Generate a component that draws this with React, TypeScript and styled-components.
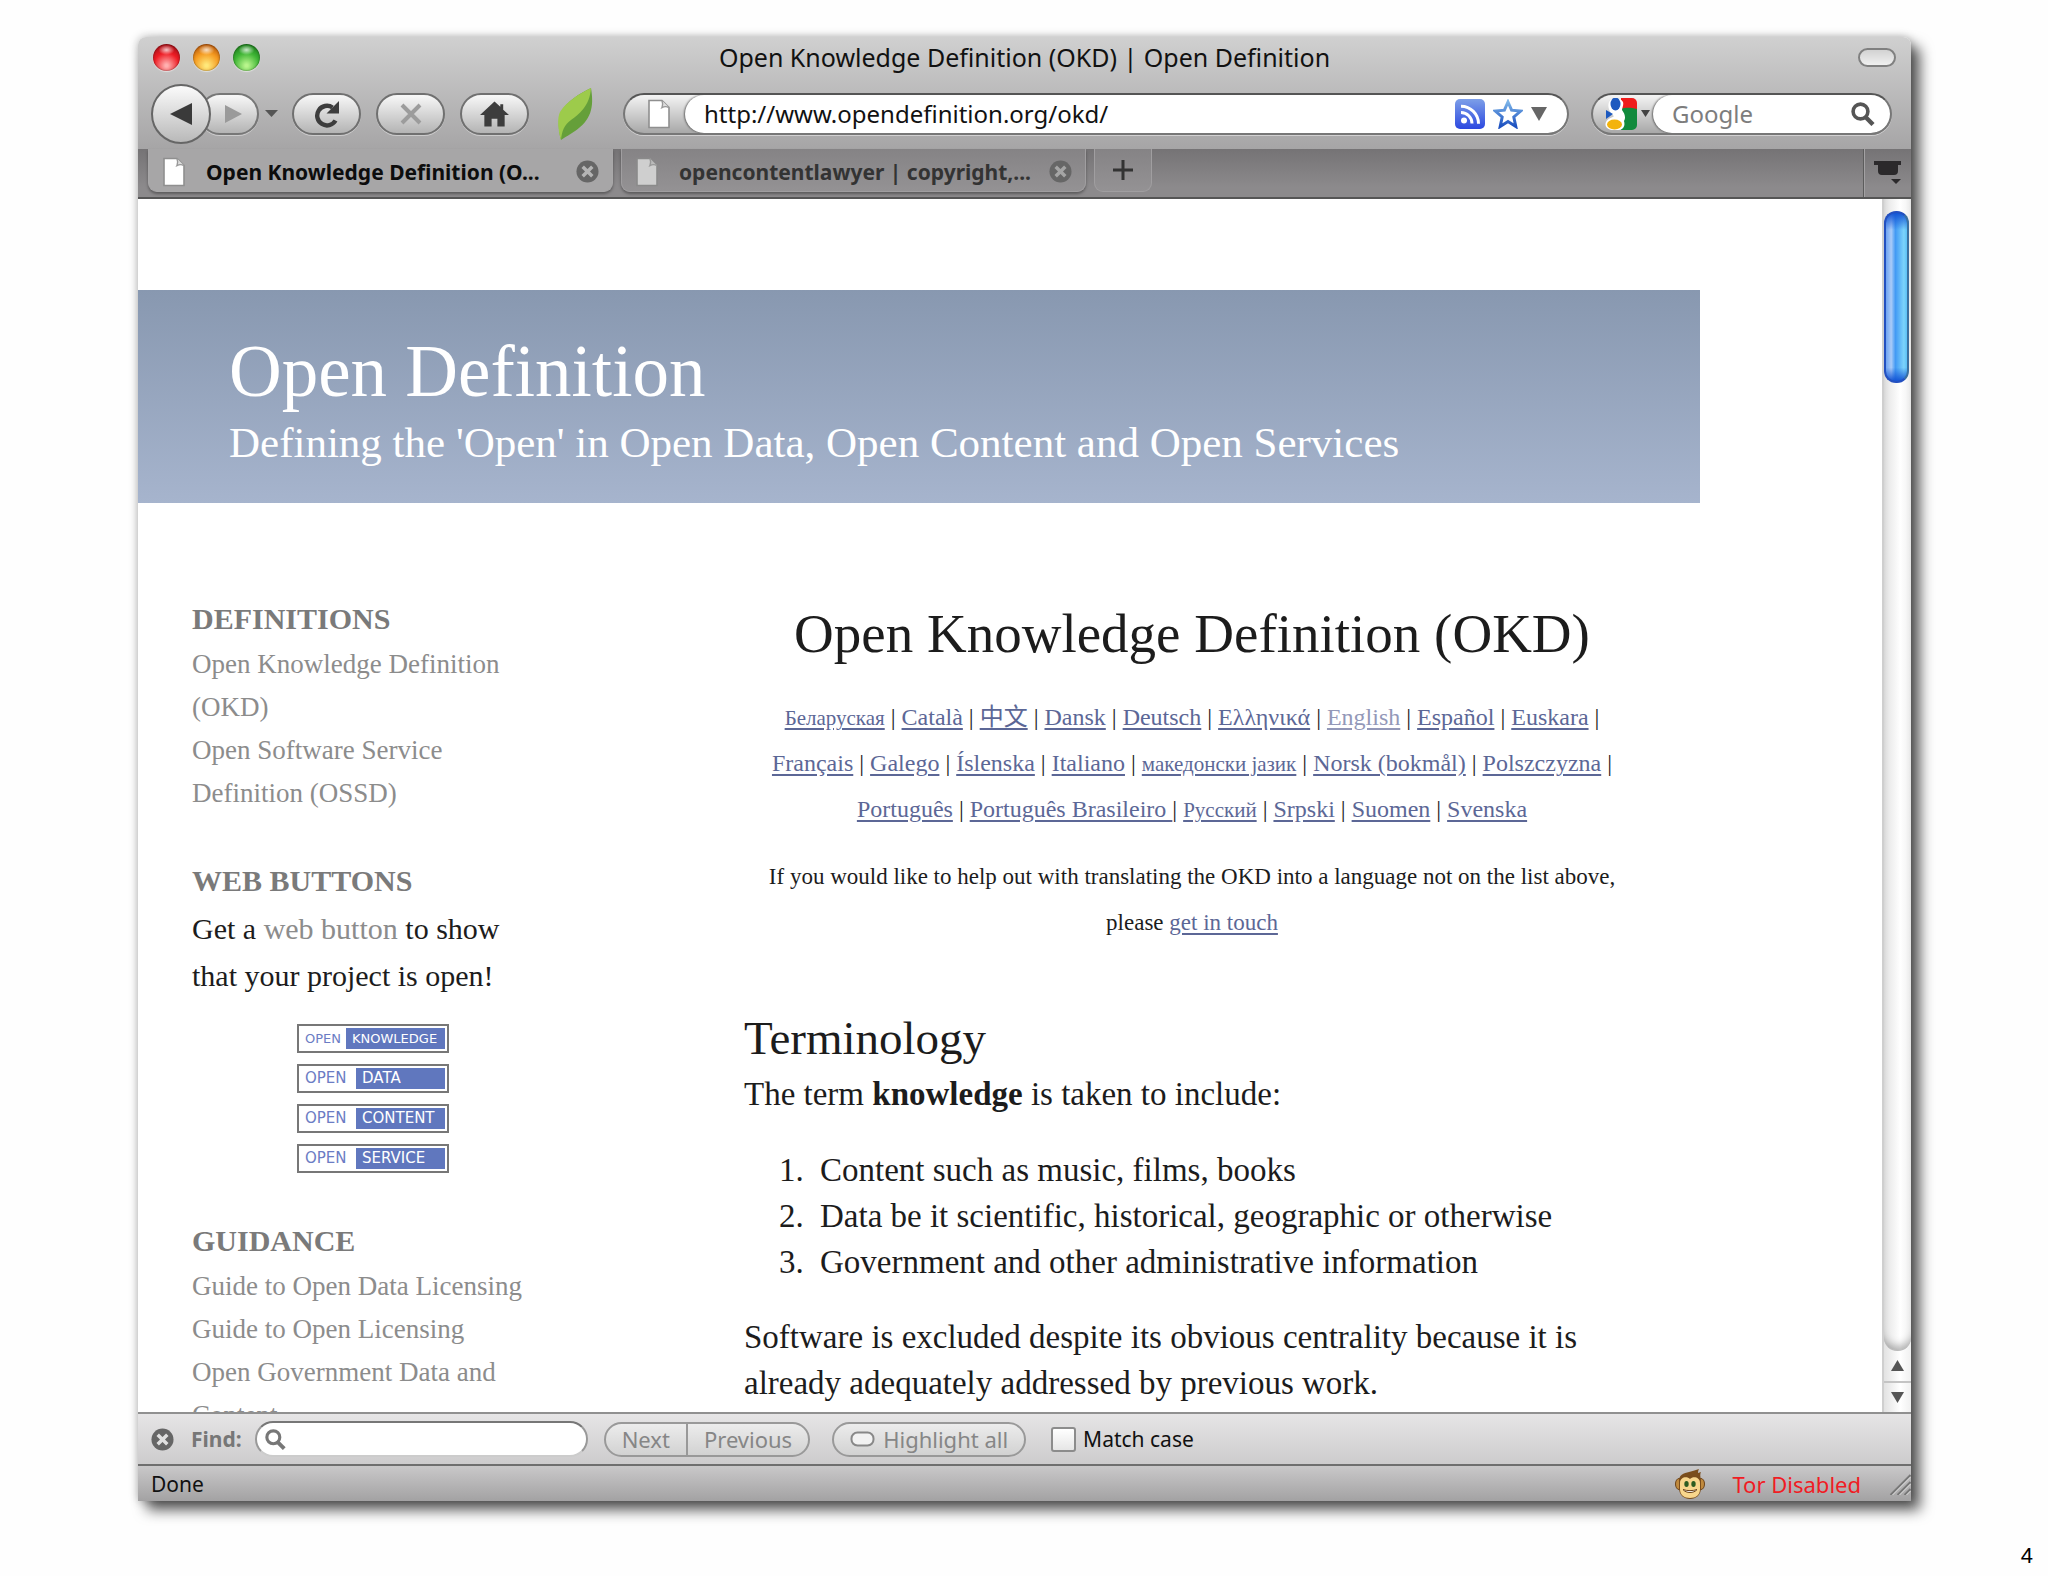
import React from 'react';
import styled, { createGlobalStyle } from 'styled-components';

const ui = '"Noto Sans", "Open Sans", sans-serif';
const serif = '"Liberation Serif", "Noto Sans CJK SC", serif';

const GlobalStyle = createGlobalStyle`
  * { box-sizing: border-box; }
  body { margin: 0; background: #fefefe; }
  button, input { font: inherit; color: inherit; }
  button { padding: 0; border: 0; background: none; }
  h1, h2, p, ul, ol { margin: 0; padding: 0; font-weight: 400; }
  svg { display: block; flex: none; }
`;

const Slide = styled.div`
  display: flex;
  flex-direction: column;
  height: 100vh;
  padding: 37px 137px 0 138px;
`;
const Window = styled.div`
  display: flex;
  flex-direction: column;
  flex: 1;
  min-height: 0;
  border-radius: 8px 8px 0 0;
  background: #fff;
  font: 22px/30px ${ui};
  color: #111;
  box-shadow: 9px 9px 14px rgba(0, 0, 0, 0.65), 0 0 10px rgba(0, 0, 0, 0.28);
`;
const SlideFooter = styled.footer`
  display: flex;
  justify-content: flex-end;
  align-items: flex-end;
  height: 75px;
  margin-right: -122px;
  padding-bottom: 6px;
  font: 22px/28px "Liberation Sans", sans-serif;
  color: #000;
`;

/* Window chrome */
const Chrome = styled.header`
  border-radius: 8px 8px 0 0;
  background: linear-gradient(#d0d0d0, #a6a5a6);
`;
const TitleBar = styled.div`
  display: grid;
  grid-template-columns: 1fr auto 1fr;
  align-items: center;
  height: 40px;
  padding: 0 15px;
`;
const Lights = styled.div`
  display: flex;
  gap: 13px;
`;
const Light = styled.button<{ $dark: string; $mid: string; $glow: string }>`
  width: 27px;
  height: 27px;
  border-radius: 50%;
  background:
    radial-gradient(ellipse 8px 5px at 50% 22%, rgba(255, 255, 255, 0.75), transparent),
    radial-gradient(circle at 50% 80%, ${p => p.$glow} 5%, ${p => p.$mid} 50%, ${p => p.$dark} 85%);
  box-shadow: inset 0 0 2px rgba(0, 0, 0, 0.6), 0 1px 1px rgba(255, 255, 255, 0.5);
`;
const WindowTitle = styled.div`
  font-size: 25px;
`;
const Pill = styled.button`
  justify-self: end;
  width: 38px;
  height: 19px;
  border: 2px solid #808080;
  border-radius: 10px;
  background: linear-gradient(#d2d2d2, #f0f0f0);
`;
const Toolbar = styled.div`
  display: flex;
  align-items: center;
  height: 72px;
  padding: 1px 19px 0 13px;
`;
const BackButton = styled.button`
  display: grid;
  place-items: center;
  position: relative;
  z-index: 1;
  width: 60px;
  height: 60px;
  border: 2px solid #666;
  border-radius: 50%;
  background: linear-gradient(#fbfbfb, #b9b9b9);
`;
const ToolButton = styled.button<{ $joined?: boolean }>`
  display: grid;
  place-items: center;
  width: ${p => (p.$joined ? 60 : 69)}px;
  height: 42px;
  margin-left: ${p => (p.$joined ? -12 : 0)}px;
  padding-left: ${p => (p.$joined ? 8 : 0)}px;
  border: 2px solid ${p => (p.$joined ? '#777' : '#707070')};
  border-radius: 21px;
  background: linear-gradient(#f8f8f8, #b4b4b4);
  box-shadow: 0 1px 0 rgba(255, 255, 255, 0.4);
`;
const HistoryButton = styled.button`
  display: grid;
  align-items: center;
  width: 33px;
  height: 40px;
  padding-left: 6px;
`;
const ButtonRow = styled.div`
  display: flex;
  align-items: center;
  gap: 15px;
`;
const Leaf = styled.div`
  margin: 0 30px 0 28px;
`;
const Field = styled.div<{ $grow?: boolean }>`
  display: flex;
  flex: ${p => (p.$grow ? '1 1 0' : '0 0 301px')};
  min-width: 0;
  height: 42px;
  border: 2px solid #777;
  border-top-color: #555;
  border-radius: 21px;
  background: linear-gradient(#f4f4f4, #a8a8a8);
  box-shadow: 0 1px 0 rgba(255, 255, 255, 0.45);
  overflow: hidden;
  & + & { margin-left: 22px; }
`;
const FieldLead = styled.div`
  display: flex;
  align-items: center;
  justify-content: center;
  gap: 4px;
  width: 60px;
  padding-left: 8px;
`;
const FieldBody = styled.div<{ $end: number }>`
  display: flex;
  align-items: center;
  flex: 1;
  min-width: 0;
  gap: 8px;
  padding: 0 ${p => p.$end}px 0 19px;
  border-radius: 20px;
  background: #fff;
  box-shadow: -1px 0 2px rgba(0, 0, 0, 0.5);
`;
const TextInput = styled.input`
  flex: 1;
  min-width: 0;
  height: 34px;
  padding: 0;
  border: 0;
  outline: 0;
  background: transparent;
  font-size: 24px;
  &::placeholder { color: #7d7d7d; opacity: 1; }
`;
const IconButton = styled.button`
  display: grid;
  place-items: center;
`;

/* Tabs */
const TabStrip = styled.div`
  display: flex;
  height: 50px;
  padding-left: 10px;
  gap: 8px;
  border-bottom: 2px solid #555;
  background: linear-gradient(#757375, #8c8a8c 80%);
  font-size: 21px;
  font-weight: 700;
`;
const Tab = styled.div<{ $active?: boolean }>`
  display: flex;
  align-items: center;
  width: 465px;
  height: 43px;
  padding: 3px 13px 0 13px;
  border: 1px solid ${p => (p.$active ? '#a9a8a9' : '#a09ea0')};
  border-top: 0;
  border-radius: 0 0 9px 9px;
  background: ${p => (p.$active ? '#a7a6a7' : 'linear-gradient(#858385, #949294)')};
  box-shadow: 0 2px 3px rgba(0, 0, 0, 0.35);
  color: ${p => (p.$active ? '#0d0d0d' : '#333')};
`;
const TabLabel = styled.span`
  flex: 1;
  min-width: 0;
  margin-left: 20px;
  white-space: nowrap;
`;
const NewTab = styled.button`
  display: grid;
  place-items: center;
  width: 58px;
  height: 43px;
  border: 1px solid #a09ea0;
  border-top: 0;
  border-radius: 0 0 9px 9px;
  background: linear-gradient(#858385, #949294);
`;
const TabList = styled.button`
  display: grid;
  place-items: center;
  width: 48px;
  margin-left: auto;
  border-left: 1px solid #5c5c5c;
  box-shadow: inset 1px 0 0 #a3a1a3;
`;

/* Page viewport */
const Viewport = styled.div`
  display: flex;
  flex: 1;
  min-height: 0;
  overflow: hidden;
`;
const Site = styled.div`
  flex: 1;
  min-width: 0;
  padding: 91px 182px 0 0;
  overflow: hidden;
  font-family: ${serif};
  color: #1c1c1c;
`;
const Banner = styled.div`
  padding: 39px 91px 34px;
  background: linear-gradient(#8898b0, #a6b4cd);
  color: #fff;
`;
const SiteName = styled.div`
  margin-bottom: 2px;
  font-size: 73px;
  line-height: 86px;
`;
const Tagline = styled.div`
  font-size: 43px;
  line-height: 52px;
`;
const Columns = styled.div`
  display: flex;
  gap: 190px;
  padding: 94px 60px 0 54px;
`;
const Sidebar = styled.aside`
  display: flex;
  flex-direction: column;
  flex: 0 0 362px;
  gap: 44px;
`;
const SideHeading = styled.h2`
  font-size: 30px;
  font-weight: 700;
  line-height: 44px;
  color: #7a7a7a;
`;
const SideList = styled.ul`
  padding-top: 2px;
  list-style: none;
  font-size: 27px;
  line-height: 43px;
`;
const SideLink = styled.a`
  color: #8c8c8c;
  text-decoration: none;
`;
const SideText = styled.p`
  max-width: 340px;
  padding-top: 2px;
  font-size: 30px;
  line-height: 47px;
`;
const Badges = styled.div`
  display: flex;
  flex-direction: column;
  align-items: center;
  gap: 11px;
  padding: 25px 0 2px;
`;
const Badge = styled.a<{ $tight: boolean }>`
  display: flex;
  width: 152px;
  height: 29px;
  padding: 2px;
  border: 2px solid #777;
  background: #fff;
  color: #6b7cc4;
  text-decoration: none;
  font: ${p => (p.$tight ? 13 : 15)}px/21px "DejaVu Sans", sans-serif;
`;
const BadgeLead = styled.span<{ $wide: boolean }>`
  flex: 0 0 ${p => (p.$wide ? 55 : 45)}px;
  padding-left: 4px;
`;
const BadgeName = styled.span`
  flex: 1;
  padding-left: 6px;
  background: #6077be;
  color: #fff;
`;
const Article = styled.main`
  flex: 1;
  min-width: 0;
  font-size: 33px;
  line-height: 46px;
`;
const ArticleTitle = styled.h1`
  margin-bottom: 23px;
  font-size: 55px;
  line-height: 74px;
  text-align: center;
`;
const Centered = styled.p<{ $size: number }>`
  margin-bottom: 22px;
  padding: 0 16px;
  font-size: ${p => p.$size}px;
  text-align: center;
`;
const Lang = styled.a<{ $small?: boolean; $current?: boolean }>`
  color: ${p => (p.$current ? '#9398b8' : '#5c6796')};
  font-size: ${p => (p.$small ? '21px' : 'inherit')};
  line-height: 1;
  text-underline-offset: 3px;
`;
const SectionTitle = styled.h2`
  margin: 67px 0 8px;
  font-size: 47px;
  line-height: 50px;
`;
const Terms = styled.ol`
  margin: 30px 0 29px;
  padding-left: 68px;
  li { padding-left: 8px; }
`;

/* Scrollbar */
const Scrollbar = styled.div`
  display: flex;
  flex-direction: column;
  flex: 0 0 29px;
  border-left: 2px solid #cfcfcf;
  background: linear-gradient(90deg, #e2e2e2, #fff 60%, #f0f0f0);
`;
const Track = styled.div`
  flex: 1;
  padding: 12px 2px 0 0;
  border-radius: 0 0 13px 13px;
  box-shadow: inset 0 -8px 8px -4px rgba(0, 0, 0, 0.3), 0 1px 0 #bbb;
`;
const Thumb = styled.div`
  height: 172px;
  border: 2px solid #2350c0;
  border-right-color: #3a6f9f;
  border-radius: 12px;
  background:
    linear-gradient(#1455d4, transparent 10%, transparent 92%, #1455d4),
    linear-gradient(90deg, #6fa4f2, #a9cbf8 25%, #429af4 45%, #7cd3fb 85%, #5cc0f5);
`;
const ScrollArrow = styled.button`
  display: grid;
  place-items: center;
  height: 31px;
  & + & { border-top: 2px solid #c4c4c4; }
`;

/* Find bar and status bar */
const FindBar = styled.form`
  display: flex;
  align-items: center;
  height: 52px;
  padding-left: 13px;
  border-top: 2px solid #909090;
  background: linear-gradient(#e6e5e6, #cdcccd);
  color: #868686;
`;
const FindLabel = styled.label`
  margin: 0 13px 0 17px;
  font-weight: 700;
  font-size: 21px;
  color: #777;
`;
const FindBox = styled.div`
  display: flex;
  align-items: center;
  width: 333px;
  height: 36px;
  margin-right: 16px;
  padding: 0 8px;
  border: 2px solid #999;
  border-top-color: #777;
  border-bottom-color: #ccc;
  border-radius: 18px;
  background: #fff;
`;
const Segments = styled.div`
  display: flex;
  height: 35px;
  margin-right: 22px;
  border: 2px solid #999;
  border-radius: 18px;
  background: linear-gradient(#ececec, #d2d2d2);
`;
const Segment = styled.button`
  display: flex;
  align-items: center;
  gap: 8px;
  padding: 0 16px;
  & + & { border-left: 2px solid #999; }
`;
const Check = styled.input`
  appearance: none;
  width: 25px;
  height: 25px;
  margin: 0 7px 0 3px;
  border: 2px solid #8c8c8c;
  border-radius: 3px;
  background: linear-gradient(#fff, #e6e6e6);
`;
const CheckLabel = styled.label`
  font-size: 21px;
  color: #111;
`;
const StatusBar = styled.footer`
  display: flex;
  align-items: center;
  height: 37px;
  padding-left: 13px;
  border-top: 2px solid #6f6f6f;
  background: linear-gradient(#c9c8c9, #a3a2a3);
`;
const Status = styled.span`
  flex: 1;
  font-size: 21px;
`;
const Tor = styled.span`
  margin: 0 27px 0 27px;
  color: #f01c24;
`;

const PageIcon = ({ dim = false }: { dim?: boolean }) => (
  <svg width="24" height="30" viewBox="0 0 24 30">
    <path d="M2 1.5h13l7 7v20H2z" fill={dim ? '#cfcfcf' : '#fff'} stroke={dim ? '#8a8a8a' : '#8f8f8f'} strokeWidth="1.6" />
    <path d="M15 1.5c1 3 1 5 0 7 2-1 5-1 7 0" fill={dim ? '#bbb' : '#ddd'} stroke="#999" strokeWidth="1.4" />
  </svg>
);
const CloseIcon = ({ bg, size = 23 }: { bg: string; size?: number }) => (
  <svg width={size} height={size} viewBox="0 0 24 24">
    <circle cx="12" cy="12" r="11.5" fill="#666" />
    <path d="M7 7l10 10m0-10L7 17" stroke={bg} strokeWidth="3.6" />
  </svg>
);
const Triangle = ({ w, h, d, fill }: { w: number; h: number; d: 'up' | 'down' | 'left' | 'right'; fill: string }) => {
  const pts = {
    up: `0,${h} ${w},${h} ${w / 2},0`,
    down: `0,0 ${w},0 ${w / 2},${h}`,
    left: `${w},0 ${w},${h} 0,${h / 2}`,
    right: `0,0 0,${h} ${w},${h / 2}`,
  }[d];
  return (
    <svg width={w} height={h}>
      <polygon points={pts} fill={fill} />
    </svg>
  );
};
const Magnifier = ({ size, color }: { size: number; color: string }) => (
  <svg width={size} height={size} viewBox="0 0 24 24" fill="none" stroke={color}>
    <circle cx="9.5" cy="9.5" r="7.4" strokeWidth="3.6" />
    <path d="M14.5 15l7.5 7.5" strokeWidth="4.4" />
  </svg>
);
const ReloadIcon = () => (
  <svg width="28" height="28" viewBox="0 0 28 28">
    <path d="M19.5 7.5A9.8 9.8 0 1 0 22.5 20.5" fill="none" stroke="#3d3d3d" strokeWidth="4.4" />
    <path d="M26 1v12.5H13.5z" fill="#3d3d3d" />
  </svg>
);
const HomeIcon = () => (
  <svg width="29" height="26" viewBox="0 0 30 26">
    <path d="M15 0l6 5.500V3h3v5.500L30 14h-4.500v12H18v-8h-6v8H4.500V14H0z" fill="#3d3d3d" />
  </svg>
);
const LeafIcon = () => (
  <svg width="36" height="52" viewBox="0 0 36 52">
    <path d="M34 0C22 6 10 13 4 24c-3 6-3 18 0 28C16 44 30 38 34 22c2-7 1-16 0-22z" fill="#659f3a" />
    <path d="M34 0C22 6 10 13 3 24c-3 6-2 18 1 28 1-9 3-15 10-20S33 18 34 0z" fill="#9dcb4b" />
  </svg>
);
const RssIcon = () => (
  <svg width="30" height="30" viewBox="0 0 30 30">
    <defs>
      <linearGradient id="rss" x1="0" y1="0" x2="0" y2="1">
        <stop offset="0" stopColor="#7d9fe8" />
        <stop offset="1" stopColor="#2c48e0" />
      </linearGradient>
    </defs>
    <rect width="30" height="30" rx="5" fill="url(#rss)" />
    <circle cx="9" cy="21.500" r="3" fill="#fff" />
    <path d="M6 13.500a11 11 0 0 1 11 11M6 7.200a17.500 17.500 0 0 1 17.500 17.500" fill="none" stroke="#fff" strokeWidth="3" />
  </svg>
);
const StarIcon = () => (
  <svg width="30" height="30" viewBox="0 0 30 30">
    <defs>
      <linearGradient id="star" x1="0" y1="0" x2="0" y2="1">
        <stop offset="0" stopColor="#7cb4e8" />
        <stop offset="1" stopColor="#1c50c0" />
      </linearGradient>
    </defs>
    <path d="M15 3l3.600 8.200 9 .8-6.800 6 2 9.500L15 22.600 7.200 27.500l2-9.500-6.800-6 9-.8z" fill="#fff" stroke="url(#star)" strokeWidth="3" />
  </svg>
);
const GoogleIcon = () => (
  <svg width="32" height="32" viewBox="0 0 32 32">
    <path d="M16 0h11a5 5 0 0 1 5 5v6H16z" fill="#ef1c1c" />
    <path d="M16 11c6-2 10-1 16 0v16a5 5 0 0 1-5 5H16z" fill="#118a3c" />
    <path d="M4 4c3-5 11-5 14 0 1 3-1 6-1 8 3 4 4 8 2 11 2 7-3 10-10 9-6 0-10-3-8-8 2-4 6-4 8-6-4-3-7-9-5-14z" fill="#fff" />
    <path d="M1 12v9l7-5z" fill="#1d59bf" />
    <ellipse cx="10.500" cy="6" rx="5" ry="6.500" fill="#1d59bf" />
    <ellipse cx="9.500" cy="26.500" rx="7.500" ry="5" fill="#f3b30c" />
  </svg>
);
const TrayIcon = () => (
  <svg width="28" height="24" viewBox="0 0 28 24">
    <path d="M0 0h27v4h-3v6a4 4 0 0 1-4 4H8a4 4 0 0 1-4-4V4H0z" fill="#2b292b" />
    <path d="M17 18h10l-5 5z" fill="#2b292b" />
  </svg>
);
const MonkeyIcon = () => (
  <svg width="30" height="30" viewBox="0 0 30 30">
    <ellipse cx="4" cy="15" rx="3.500" ry="5.500" fill="#c08a3e" stroke="#6d441a" />
    <ellipse cx="26" cy="15" rx="3.500" ry="5.500" fill="#c08a3e" stroke="#6d441a" />
    <path d="M4 13C3 6 9 4 14 3c4-1 7-2 10-3-1 2-1 3-1 4l3-1c-1 2-1 4 0 8v8c0 7-5 11-11 11S4 26 4 19z" fill="#7a4d1c" />
    <path d="M5 14c0-6 7-7 10-4 3-3 10-2 10 4v6c0 6-4 9-10 9S5 26 5 20z" fill="#f8d68c" />
    <ellipse cx="11.500" cy="15" rx="2.200" ry="3" fill="#2c5c20" />
    <ellipse cx="18.500" cy="15" rx="2.200" ry="3" fill="#2c5c20" />
    <path d="M8 20.500c3 4 11 4 14 0-4 1.500-10 1.500-14 0z" fill="#fff" stroke="#6d441a" />
  </svg>
);
const GripIcon = () => (
  <svg width="23" height="22" viewBox="0 0 22 22" fill="none">
    <path d="M2 22L22 2M9 22L22 9M16 22l6-6" stroke="#777" strokeWidth="2" />
    <path d="M4 22L22 4M11 22L22 11M18 22l4-4" stroke="#ddd" />
  </svg>
);

type Language = { name: string; small?: boolean; current?: boolean };
const languages: Language[] = [
  { name: 'Беларуская', small: true }, { name: 'Català' }, { name: '中文' }, { name: 'Dansk' },
  { name: 'Deutsch' }, { name: 'Ελληνικά' }, { name: 'English', current: true }, { name: 'Español' },
  { name: 'Euskara' }, { name: 'Français' }, { name: 'Galego' }, { name: 'Íslenska' }, { name: 'Italiano' },
  { name: 'македонски јазик', small: true }, { name: 'Norsk (bokmål)' }, { name: 'Polszczyzna' },
  { name: 'Português' }, { name: 'Português Brasileiro ' }, { name: 'Русский', small: true },
  { name: 'Srpski' }, { name: 'Suomen' }, { name: 'Svenska' },
];
const badges = ['KNOWLEDGE', 'DATA', 'CONTENT', 'SERVICE'];

const SideLinks = ({ items }: { items: string[] }) => (
  <SideList>
    {items.map(item => (
      <li key={item}><SideLink href="#">{item}</SideLink></li>
    ))}
  </SideList>
);

export default function App() {
  return (
    <Slide>
      <GlobalStyle />
      <Window>
        <Chrome>
          <TitleBar>
            <Lights>
              <Light aria-label="Close" $dark="#a01018" $mid="#ee1c24" $glow="#ffb0b0" />
              <Light aria-label="Minimize" $dark="#b4560c" $mid="#f59a20" $glow="#ffe87a" />
              <Light aria-label="Zoom" $dark="#1c7a1c" $mid="#3fb535" $glow="#b8f58c" />
            </Lights>
            <WindowTitle>Open Knowledge Definition (OKD) | Open Definition</WindowTitle>
            <Pill aria-label="Toggle toolbar" />
          </TitleBar>
          <Toolbar>
            <BackButton aria-label="Back"><Triangle w={22} h={22} d="left" fill="#3a3a3a" /></BackButton>
            <ToolButton $joined aria-label="Forward"><Triangle w={17} h={18} d="right" fill="#9a9a9a" /></ToolButton>
            <HistoryButton aria-label="History"><Triangle w={13} h={7} d="down" fill="#555" /></HistoryButton>
            <ButtonRow>
              <ToolButton aria-label="Reload"><ReloadIcon /></ToolButton>
              <ToolButton aria-label="Stop">
                <svg width="22" height="22" viewBox="0 0 22 22">
                  <path d="M2 2l18 18M20 2L2 20" stroke="#9c9c9c" strokeWidth="4" />
                </svg>
              </ToolButton>
              <ToolButton aria-label="Home"><HomeIcon /></ToolButton>
            </ButtonRow>
            <Leaf><LeafIcon /></Leaf>
            <Field $grow>
              <FieldLead><PageIcon /></FieldLead>
              <FieldBody $end={20}>
                <TextInput aria-label="Address" defaultValue="http://www.opendefinition.org/okd/" />
                <IconButton aria-label="Feed"><RssIcon /></IconButton>
                <IconButton aria-label="Bookmark"><StarIcon /></IconButton>
                <IconButton aria-label="Addresses"><Triangle w={16} h={14} d="down" fill="#666" /></IconButton>
              </FieldBody>
            </Field>
            <Field>
              <FieldLead><GoogleIcon /><Triangle w={9} h={7} d="down" fill="#444" /></FieldLead>
              <FieldBody $end={15}>
                <TextInput aria-label="Search" placeholder="Google" />
                <IconButton aria-label="Search"><Magnifier size={24} color="#555" /></IconButton>
              </FieldBody>
            </Field>
          </Toolbar>
        </Chrome>
        <TabStrip>
          <Tab $active>
            <PageIcon />
            <TabLabel>Open Knowledge Definition (O...</TabLabel>
            <IconButton aria-label="Close tab"><CloseIcon bg="#b5b5b5" /></IconButton>
          </Tab>
          <Tab>
            <PageIcon dim />
            <TabLabel>opencontentlawyer | copyright,...</TabLabel>
            <IconButton aria-label="Close tab"><CloseIcon bg="#a5a5a5" /></IconButton>
          </Tab>
          <NewTab aria-label="New tab">
            <svg width="20" height="20" viewBox="0 0 20 20">
              <path d="M10 0v20M0 10h20" stroke="#333" strokeWidth="3" />
            </svg>
          </NewTab>
          <TabList aria-label="All tabs"><TrayIcon /></TabList>
        </TabStrip>

        <Viewport>
          <Site>
            <Banner>
              <SiteName>Open Definition</SiteName>
              <Tagline>Defining the 'Open' in Open Data, Open Content and Open Services</Tagline>
            </Banner>
            <Columns>
              <Sidebar>
                <section>
                  <SideHeading>DEFINITIONS</SideHeading>
                  <SideLinks items={['Open Knowledge Definition (OKD)', 'Open Software Service Definition (OSSD)']} />
                </section>
                <section>
                  <SideHeading>WEB BUTTONS</SideHeading>
                  <SideText>
                    Get a <SideLink href="#">web button</SideLink> to show that your project is open!
                  </SideText>
                  <Badges>
                    {badges.map(name => (
                      <Badge key={name} href="#" $tight={name === 'KNOWLEDGE'}>
                        <BadgeLead $wide={name !== 'KNOWLEDGE'}>OPEN</BadgeLead>
                        <BadgeName>{name}</BadgeName>
                      </Badge>
                    ))}
                  </Badges>
                </section>
                <section>
                  <SideHeading>GUIDANCE</SideHeading>
                  <SideLinks items={['Guide to Open Data Licensing', 'Guide to Open Licensing', 'Open Government Data and Content']} />
                </section>
              </Sidebar>
              <Article>
                <ArticleTitle>Open Knowledge Definition (OKD)</ArticleTitle>
                <Centered $size={24}>
                  {languages.map((l, i) => (
                    <React.Fragment key={l.name}>
                      <Lang href="#" $small={l.small} $current={l.current}>{l.name}</Lang>
                      {i < languages.length - 1 && (l.name.endsWith(' ') ? '| ' : '\u00a0| ')}
                    </React.Fragment>
                  ))}
                </Centered>
                <Centered $size={23}>
                  If you would like to help out with translating the OKD into a language not on the list above,
                  please <Lang href="#">get in touch</Lang>
                </Centered>
                <SectionTitle>Terminology</SectionTitle>
                <p>The term <strong>knowledge</strong> is taken to include:</p>
                <Terms>
                  <li>Content such as music, films, books</li>
                  <li>Data be it scientific, historical, geographic or otherwise</li>
                  <li>Government and other administrative information</li>
                </Terms>
                <p>Software is excluded despite its obvious centrality because it is already adequately addressed by previous work.</p>
              </Article>
            </Columns>
          </Site>
          <Scrollbar>
            <Track><Thumb /></Track>
            <ScrollArrow aria-label="Scroll up"><Triangle w={13} h={11} d="up" fill="#555" /></ScrollArrow>
            <ScrollArrow aria-label="Scroll down"><Triangle w={13} h={11} d="down" fill="#555" /></ScrollArrow>
          </Scrollbar>
        </Viewport>

        <FindBar>
          <IconButton type="button" aria-label="Close find bar"><CloseIcon bg="#e0e0e0" /></IconButton>
          <FindLabel htmlFor="find">Find:</FindLabel>
          <FindBox>
            <Magnifier size={21} color="#777" />
            <TextInput id="find" />
          </FindBox>
          <Segments>
            <Segment type="button">Next</Segment>
            <Segment type="button">Previous</Segment>
          </Segments>
          <Segments>
            <Segment type="button">
              <svg width="25" height="16" viewBox="0 0 25 16">
                <rect x="1.500" y="1.500" width="22" height="13" rx="6" fill="#f2f2f2" stroke="#888" strokeWidth="2" />
              </svg>
              Highlight all
            </Segment>
          </Segments>
          <Check type="checkbox" id="match" />
          <CheckLabel htmlFor="match">Match case</CheckLabel>
        </FindBar>
        <StatusBar>
          <Status>Done</Status>
          <MonkeyIcon />
          <Tor>Tor Disabled</Tor>
          <GripIcon />
        </StatusBar>
      </Window>
      <SlideFooter>4</SlideFooter>
    </Slide>
  );
}
